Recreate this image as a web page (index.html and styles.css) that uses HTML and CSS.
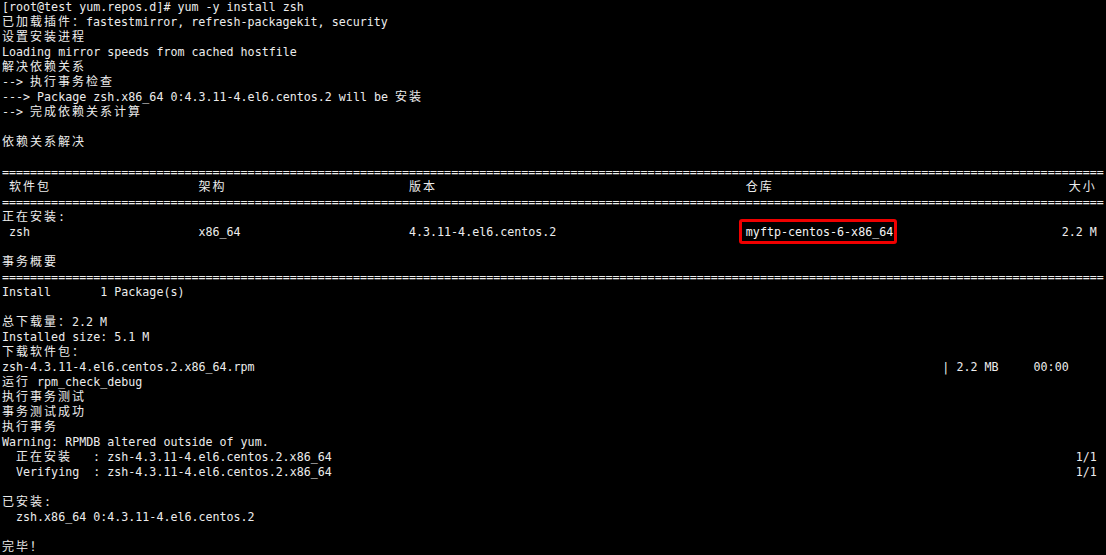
FILE: index.html
```html
<!DOCTYPE html>
<html lang="zh-CN">
<head>
<meta charset="utf-8">
<title>yum install zsh</title>
<link rel="stylesheet" href="styles.css">
</head>
<body>
<div class="term">
<div class="ln">[root@test yum.repos.d]# yum -y install zsh</div>
<div class="ln"><span class="c">已加载插件：</span>fastestmirror, refresh-packagekit, security</div>
<div class="ln"><span class="c">设置安装进程</span></div>
<div class="ln">Loading mirror speeds from cached hostfile</div>
<div class="ln"><span class="c">解决依赖关系</span></div>
<div class="ln">--&gt; <span class="c">执行事务检查</span></div>
<div class="ln">---&gt; Package zsh.x86_64 0:4.3.11-4.el6.centos.2 will be <span class="c">安装</span></div>
<div class="ln">--&gt; <span class="c">完成依赖关系计算</span></div>
<div class="ln"></div>
<div class="ln"><span class="c">依赖关系解决</span></div>
<div class="ln"></div>
<div class="ln sep">=============================================================================================================================================================</div>
<div class="ln row"><span class="first"><span class="c">软件包</span></span><span><span class="c">架构</span></span><span><span class="c">版本</span></span><span><span class="c">仓库</span></span><span class="last"><span class="c">大小</span></span></div>
<div class="ln sep">=============================================================================================================================================================</div>
<div class="ln"><span class="c">正在安装</span>:</div>
<div class="ln row"><span class="first">zsh</span><span>x86_64</span><span>4.3.11-4.el6.centos.2</span><span><span class="box">myftp-centos-6-x86_64</span></span><span class="last">2.2 M</span></div>
<div class="ln"></div>
<div class="ln"><span class="c">事务概要</span></div>
<div class="ln sep">=============================================================================================================================================================</div>
<div class="ln">Install       1 Package(s)</div>
<div class="ln"></div>
<div class="ln"><span class="c">总下载量：</span>2.2 M</div>
<div class="ln">Installed size: 5.1 M</div>
<div class="ln"><span class="c">下载软件包：</span></div>
<div class="ln split"><span>zsh-4.3.11-4.el6.centos.2.x86_64.rpm</span><span class="prog">| 2.2 MB     00:00</span></div>
<div class="ln"><span class="c">运行</span> rpm_check_debug</div>
<div class="ln"><span class="c">执行事务测试</span></div>
<div class="ln"><span class="c">事务测试成功</span></div>
<div class="ln"><span class="c">执行事务</span></div>
<div class="ln">Warning: RPMDB altered outside of yum.</div>
<div class="ln split"><span>  <span class="c">正在安装</span>   : zsh-4.3.11-4.el6.centos.2.x86_64</span><span>1/1</span></div>
<div class="ln split"><span>  Verifying  : zsh-4.3.11-4.el6.centos.2.x86_64</span><span>1/1</span></div>
<div class="ln"></div>
<div class="ln"><span class="c">已安装</span>:</div>
<div class="ln">  zsh.x86_64 0:4.3.11-4.el6.centos.2</div>
<div class="ln"></div>
<div class="ln"><span class="c">完毕！</span></div>
</div>
</body>
</html>
```
FILE: styles.css
```css
html, body {
  margin: 0;
  padding: 0;
  background: #000;
}

.term {
  width: 1106px;
  height: 555px;
  overflow: hidden;
  box-sizing: border-box;
  padding-left: 2px;
  font-family: "DejaVu Sans Mono", "Noto Sans CJK SC", monospace;
  font-size: 11.66px;
  color: #ececec;
  background: #000;
}

.ln {
  height: 15px;
  line-height: 15px;
  white-space: pre;
}

.c {
  font-family: "Noto Sans CJK SC", "DejaVu Sans Mono", sans-serif;
  font-size: 12px;
  line-height: 0;
  letter-spacing: 2px;
}

.sep {
  width: 1104px;
  overflow: hidden;
}

.row {
  display: grid;
  grid-template-columns: 28ch 30ch 48ch 1fr auto;
  width: 156ch;
}

.row .first {
  padding-left: 1ch;
}

.row .last {
  justify-self: end;
}

.split {
  display: flex;
  justify-content: space-between;
  width: 156ch;
}

.prog {
  padding-right: 4ch;
}

.box {
  display: inline-block;
  position: relative;
  height: 15px;
  color: #f4f4f4;
}

.box::after {
  content: "";
  position: absolute;
  left: -7px;
  right: -4px;
  top: -6px;
  bottom: -4px;
  border: 3px solid #f00000;
  border-radius: 3px;
}
```
